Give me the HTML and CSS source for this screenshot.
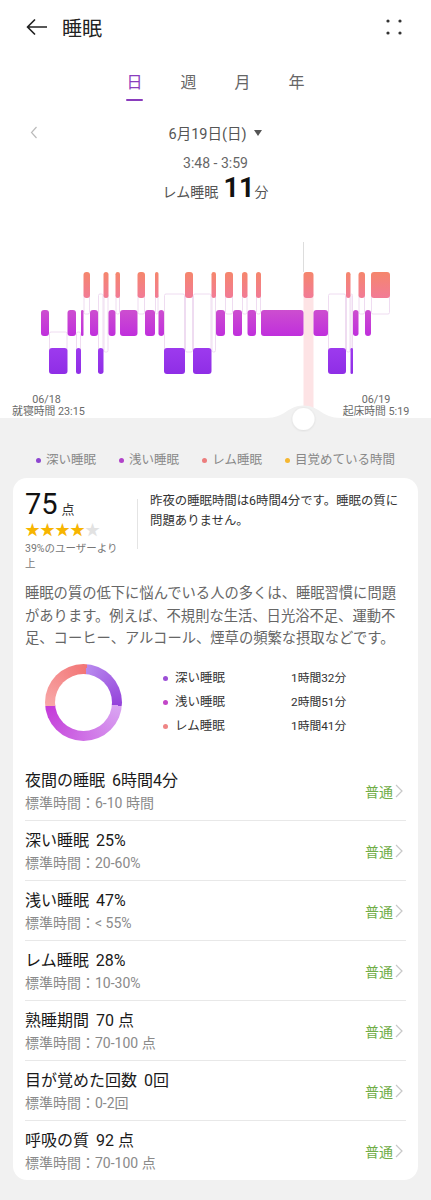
FILE: index.html
```
<!DOCTYPE html>
<html lang="ja">
<head>
    <meta charset="UTF-8">
    <meta name="viewport" content="width=device-width, initial-scale=1.0">
    <title>睡眠</title>
    <link rel="stylesheet" href="styles.css">
</head>
<body>
    <div class="top">
        <div class="header">
            <svg class="back" viewBox="0 0 21 16"><path d="M20.5 8H1.5M8.5 1L1.5 8l7 7" fill="none" stroke="#222" stroke-width="1.7" stroke-linecap="round" stroke-linejoin="round"/></svg>
            <span class="title">睡眠</span>
            <svg class="menu" viewBox="0 0 16 16"><circle cx="2" cy="2" r="1.6"/><circle cx="14" cy="2" r="1.6"/><circle cx="2" cy="14" r="1.6"/><circle cx="14" cy="14" r="1.6"/></svg>
        </div>

        <div class="tabs">
            <span class="tab active">日</span>
            <span class="tab">週</span>
            <span class="tab">月</span>
            <span class="tab">年</span>
        </div>

        <div class="date-row">
            <span class="prev"><svg viewBox="0 0 8 13" width="8" height="13"><path d="M6.5 1L1.5 6.5l5 5.5" fill="none" stroke="#bbb" stroke-width="1.2"/></svg></span>
            <span class="date">6月19日(日) <svg viewBox="0 0 8 6" width="8" height="6"><path d="M0 0h8L4 6z" fill="#555"/></svg></span>
            <span></span>
        </div>
        <div class="time">3:48 - 3:59</div>
        <div class="stage">レム睡眠 <b>11</b>分</div>

        <svg class="chart" id="chart" viewBox="0 0 431 200" width="431" height="200">
            <defs>
                <linearGradient id="gR" x1="0" y1="0" x2="0" y2="1"><stop offset="0" stop-color="#f5866c"/><stop offset="1" stop-color="#f27b96"/></linearGradient>
                <linearGradient id="gL" x1="0" y1="0" x2="0" y2="1"><stop offset="0" stop-color="#cd4ecf"/><stop offset="1" stop-color="#c02fdc"/></linearGradient>
                <linearGradient id="gD" x1="0" y1="0" x2="0" y2="1"><stop offset="0" stop-color="#9d3aee"/><stop offset="1" stop-color="#8f2ee6"/></linearGradient>
                <filter id="knobShadow" x="-50%" y="-50%" width="200%" height="200%"><feDropShadow dx="0" dy="0.5" stdDeviation="1" flood-color="#000" flood-opacity="0.12"/></filter>
            </defs>
            <line x1="303.5" y1="10" x2="303.5" y2="40" stroke="#ddd" stroke-width="1"/>
            <g id="cols"></g>
            <rect x="303.5" y="62" width="10" height="114" fill="#fde3e5"/>
            <g id="bars"></g>
            <rect x="0" y="186" width="431" height="14" fill="#f1f1f1"/>
            <path d="M266 186C286 186 287 173.5 303.5 173.5C320 173.5 321 186 341 186Z" fill="#f1f1f1"/>
            <circle cx="303.5" cy="187" r="11" fill="#fff" filter="url(#knobShadow)"/>
            <text class="axis" x="46.5" y="171">06/18</text>
            <text class="axis" x="48.5" y="183">就寝時間 23:15</text>
            <text class="axis" x="376" y="171">06/19</text>
            <text class="axis" x="376" y="183">起床時間 5:19</text>
        </svg>
    </div>

    <div class="bottom">
        <div class="legend">
            <span><i class="dot deep"></i>深い睡眠</span>
            <span><i class="dot light"></i>浅い睡眠</span>
            <span><i class="dot rem"></i>レム睡眠</span>
            <span><i class="dot awake"></i>目覚めている時間</span>
        </div>

        <div class="card">
            <div class="score">
                <div class="score-left">
                    <div class="num">75<small>点</small></div>
                    <div class="stars">★★★★<span class="off">★</span></div>
                    <div class="rank">39%のユーザーより上</div>
                </div>
                <div class="divider"></div>
                <div class="score-text">昨夜の睡眠時間は6時間4分です。睡眠の質に問題ありません。</div>
            </div>

            <p class="advice">睡眠の質の低下に悩んでいる人の多くは、睡眠習慣に問題があります。例えば、不規則な生活、日光浴不足、運動不足、コーヒー、アルコール、煙草の頻繁な摂取などです。</p>

            <div class="dist">
                <div class="donut"></div>
                <div class="dist-list">
                    <i class="dot deep2"></i><span>深い睡眠</span><span class="val">1時間32分</span>
                    <i class="dot light2"></i><span>浅い睡眠</span><span class="val">2時間51分</span>
                    <i class="dot rem2"></i><span>レム睡眠</span><span class="val">1時間41分</span>
                </div>
            </div>

            <div class="rows" id="rows"></div>
        </div>
    </div>

    <script>
        const rows = [
            ['夜間の睡眠', '6時間4分', '6-10 時間'],
            ['深い睡眠', '25%', '20-60%'],
            ['浅い睡眠', '47%', '< 55%'],
            ['レム睡眠', '28%', '10-30%'],
            ['熟睡期間', '70 点', '70-100 点'],
            ['目が覚めた回数', '0回', '0-2回'],
            ['呼吸の質', '92 点', '70-100 点']
        ];

        const rowsBox = document.getElementById('rows');
        rows.forEach(r => {
            const row = document.createElement('div');
            row.className = 'row';
            row.innerHTML = '<div class="row-main"><div class="row-title">' + r[0] + '<span class="row-val">' + r[1] + '</span></div>'
                + '<div class="row-sub">標準時間：' + r[2].replace('<', '&lt;') + '</div></div>'
                + '<span class="status">普通</span>'
                + '<svg class="chev" viewBox="0 0 8 14" width="8" height="14"><path d="M1 1l6 6-6 6" fill="none" stroke="#c8c8c8" stroke-width="1.2"/></svg>';
            rowsBox.appendChild(row);
        });

        // hypnogram: [start x, end x, level] level 0 = rem, 1 = light, 2 = deep
        const segs = [
            [41, 49, 1], [49, 67.5, 2], [67.5, 76, 1], [76, 81, 2], [81, 83.5, 1], [83.5, 90, 0],
            [90, 98, 1], [98, 103.5, 2], [103.5, 108.5, 0], [108.5, 115.5, 1], [115.5, 120, 0],
            [120, 137.5, 1], [137.5, 145, 0], [145, 155, 1], [155, 158.5, 0], [158.5, 164, 1],
            [164, 185, 2], [185, 193, 0], [193, 211.5, 2], [211.5, 216, 0], [216, 225, 1],
            [225, 233, 0], [233, 242, 1], [242, 247.5, 0], [247.5, 256, 1], [256, 261, 0],
            [261, 303.5, 1], [303.5, 313.5, 0], [313.5, 328, 1], [328, 346, 2], [346, 350.5, 0],
            [350.5, 353, 2], [353, 358.5, 1], [358.5, 365, 0], [365, 371, 1], [371, 390, 0]
        ];
        const selected = 27;
        const bands = [[40, 66], [78, 104], [116, 142]];
        const fills = ['url(#gR)', 'url(#gL)', 'url(#gD)'];
        const NS = 'http://www.w3.org/2000/svg';
        const cols = document.getElementById('cols');
        const bars = document.getElementById('bars');

        function rect(parent, attrs) {
            const el = document.createElementNS(NS, 'rect');
            for (const k in attrs) el.setAttribute(k, attrs[k]);
            parent.appendChild(el);
        }

        segs.forEach((s, i) => {
            const [x0, x1, lv] = s;
            const w = Math.max(x1 - x0, 1.5);
            const near = [segs[i - 1], segs[i + 1]].filter(Boolean).map(n => n[2]);
            // rem bars hang a white stem down, deep bars raise one up
            if (i !== selected && lv !== 1) {
                let y0, y1;
                if (lv === 0) {
                    y0 = bands[0][1] - 4;
                    y1 = (near.includes(2) ? bands[2][0] : bands[1][0]) + 4;
                } else {
                    y0 = (near.includes(0) ? bands[0][1] : bands[1][1]) - 4;
                    y1 = bands[2][0] + 4;
                }
                rect(cols, { x: x0 + 0.5, y: y0, width: Math.max(w - 1, 1), height: y1 - y0, rx: 1.5, fill: '#fff', stroke: '#efdcf1', 'stroke-width': 1 });
            }
            rect(bars, { x: x0, y: bands[lv][0], width: w, height: 26, rx: Math.min(3, w / 2), fill: fills[lv] });
        });
    </script>
</body>
</html>
```

FILE: styles.css
```
body {
    margin: 0;
    font-family: Roboto, "Noto Sans CJK JP", sans-serif;
    background: #f1f1f1;
    color: #222;
}
.top {
    background: #fff;
}
.header {
    height: 54px;
    display: flex;
    align-items: center;
    padding: 0 29px 0 26px;
}
.back {
    width: 21px;
    height: 16px;
}
.title {
    margin-left: 15px;
    font-size: 20px;
    flex: 1;
}
.menu {
    width: 16px;
    height: 16px;
    fill: #333;
}
.tabs {
    display: flex;
    justify-content: center;
    margin-top: 18px;
}
.tab {
    width: 54px;
    text-align: center;
    font-size: 16px;
    line-height: 22px;
    color: #666;
}
.tab.active {
    color: #8a3dbd;
}
.tab.active::after {
    content: "";
    display: block;
    width: 17px;
    height: 2px;
    margin: 5px auto 0;
    background: #8a3dbd;
    border-radius: 1px;
}
.date-row {
    display: grid;
    grid-template-columns: 1fr auto 1fr;
    align-items: center;
    height: 20px;
    margin-top: 21px;
}
.prev {
    padding-left: 30px;
    display: flex;
}
.date {
    display: flex;
    align-items: center;
    gap: 8px;
    font-size: 14.5px;
    color: #555;
}
.time {
    margin-top: 11px;
    text-align: center;
    font-size: 14px;
    line-height: 20px;
    color: #666;
}
.stage {
    text-align: center;
    font-size: 14px;
    line-height: 30px;
    color: #555;
}
.stage b {
    font-size: 27px;
    font-weight: 700;
    color: #111;
    margin-left: 2px;
}
.chart {
    display: block;
    margin-top: 25px;
}
.axis {
    font-size: 10.8px;
    fill: #6a6a6a;
    text-anchor: middle;
}
.bottom {
    padding-bottom: 20px;
}
.legend {
    display: flex;
    justify-content: center;
    gap: 23px;
    font-size: 12.5px;
    line-height: 18px;
    color: #888;
    padding-top: 19px;
}
.legend span {
    display: flex;
    align-items: center;
}
.dot {
    display: inline-block;
    width: 5px;
    height: 5px;
    border-radius: 50%;
    margin-right: 5px;
}
.deep { background: #8d45d0; }
.light { background: #b142c9; }
.rem { background: #ec7d7d; }
.awake { background: #f5b731; }
.card {
    margin: 9px 13px 0;
    padding: 0 12px;
    background: #fff;
    border-radius: 14px;
}
.score {
    display: flex;
    padding-top: 10px;
}
.score-left {
    width: 100px;
}
.num {
    height: 32px;
    font-size: 29px;
    line-height: 32px;
    color: #111;
}
.num small {
    font-size: 13px;
    margin-left: 4px;
    color: #333;
}
.stars {
    height: 16px;
    margin-top: 2px;
    font-size: 15px;
    line-height: 16px;
    color: #f7b500;
    overflow: hidden;
}
.stars .off {
    color: #e2e2e2;
}
.rank {
    margin-top: 3px;
    font-size: 10.5px;
    line-height: 15px;
    color: #777;
}
.divider {
    width: 1px;
    height: 50px;
    margin: 11px 12px 0;
    background: #e4e4e4;
}
.score-text {
    flex: 1;
    padding-top: 3px;
    font-size: 12.4px;
    line-height: 20px;
    color: #333;
}
.advice {
    margin: 11px 0 0;
    font-size: 14.3px;
    line-height: 22.5px;
    color: #666;
}
.dist {
    display: flex;
    align-items: center;
    padding: 14px 0 20px 20px;
}
.donut {
    position: relative;
    width: 77px;
    height: 77px;
    border-radius: 50%;
    background: conic-gradient(from 5deg, #b88aee 0deg, #9442da 90deg, #d9a5f2 90deg, #c43bd9 259deg, #f8a8a8 259deg, #f27575 360deg);
}
.donut::after {
    content: "";
    position: absolute;
    inset: 10px;
    border-radius: 50%;
    background: #fff;
}
.dist-list {
    display: grid;
    grid-template-columns: 12.5px 116px auto;
    align-items: center;
    margin-left: 40.5px;
    line-height: 24px;
    font-size: 12.5px;
    color: #333;
}
.dist-list .val {
    font-size: 11.8px;
}
.deep2 { background: #9c4fd6; }
.light2 { background: #c246c8; }
.rem2 { background: #ef8585; }
.row {
    display: flex;
    align-items: center;
    padding: 8px 0 6px;
    border-bottom: 1px solid #e8e8e8;
}
.row:last-child {
    border-bottom: none;
}
.row-main {
    flex: 1;
}
.row-title {
    font-size: 16px;
    line-height: 23px;
    color: #1a1a1a;
}
.row-val {
    margin-left: 7px;
}
.row-sub {
    font-size: 14px;
    line-height: 22px;
    color: #8a8a8a;
}
.status {
    font-size: 14px;
    color: #70ad47;
}
.chev {
    margin: 0 3px 0 2px;
}
```
